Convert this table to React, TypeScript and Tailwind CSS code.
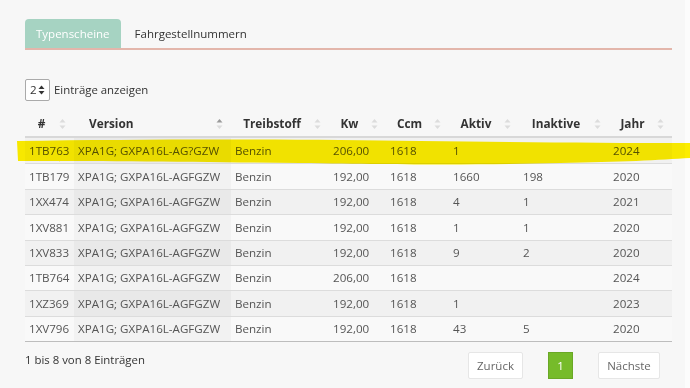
import React from 'react';

interface Row {
  nr: string;
  version: string;
  fuel: string;
  kw: string;
  ccm: string;
  active: string;
  inactive: string;
  year: string;
}

const rows: Row[] = [
  { nr: '1TB763', version: 'XPA1G; GXPA16L-AG?GZW', fuel: 'Benzin', kw: '206,00', ccm: '1618', active: '1', inactive: '', year: '2024' },
  { nr: '1TB179', version: 'XPA1G; GXPA16L-AGFGZW', fuel: 'Benzin', kw: '192,00', ccm: '1618', active: '1660', inactive: '198', year: '2020' },
  { nr: '1XX474', version: 'XPA1G; GXPA16L-AGFGZW', fuel: 'Benzin', kw: '192,00', ccm: '1618', active: '4', inactive: '1', year: '2021' },
  { nr: '1XV881', version: 'XPA1G; GXPA16L-AGFGZW', fuel: 'Benzin', kw: '192,00', ccm: '1618', active: '1', inactive: '1', year: '2020' },
  { nr: '1XV833', version: 'XPA1G; GXPA16L-AGFGZW', fuel: 'Benzin', kw: '192,00', ccm: '1618', active: '9', inactive: '2', year: '2020' },
  { nr: '1TB764', version: 'XPA1G; GXPA16L-AGFGZW', fuel: 'Benzin', kw: '206,00', ccm: '1618', active: '', inactive: '', year: '2024' },
  { nr: '1XZ369', version: 'XPA1G; GXPA16L-AGFGZW', fuel: 'Benzin', kw: '192,00', ccm: '1618', active: '1', inactive: '', year: '2023' },
  { nr: '1XV796', version: 'XPA1G; GXPA16L-AGFGZW', fuel: 'Benzin', kw: '192,00', ccm: '1618', active: '43', inactive: '5', year: '2020' },
];

// column widths in px, in table order
const cols = 'grid grid-cols-[49px_157px_98px_57px_63px_70px_90px_63px]';

// little DataTables style up/down arrows
const SortIcon: React.FC<{ asc?: boolean }> = ({ asc }) => (
  <svg width="7" height="12" viewBox="0 0 7 12" className="absolute right-[8px] top-1/2 -translate-y-1/2">
    <path d="M3.5 1 L6.5 4.5 L0.5 4.5 Z" fill={asc ? '#9a9a9a' : '#dcdcdc'} />
    <path d="M3.5 11 L6.5 7.5 L0.5 7.5 Z" fill="#dcdcdc" />
  </svg>
);

const Th: React.FC<{ label: string; left?: boolean; asc?: boolean }> = ({ label, left, asc }) => (
  <div className={`relative flex items-center h-full font-bold text-[#333] ${left ? 'pl-[15px]' : 'justify-center pr-[16px]'}`}>
    {label}
    <SortIcon asc={asc} />
  </div>
);

const App: React.FC = () => {
  return (
    <div className="relative flex w-[690px] h-[388px] overflow-hidden bg-[#f7f7f7] text-[11.6px] text-[#555] font-['Open_Sans',sans-serif]">
      <div className="w-[685px] px-[25px] pt-[19px]">
        {/* tabs */}
        <div className="flex items-end border-b-2 border-[#e3b6ab] w-[647px]">
          <div className="h-[29px] px-[11px] flex items-center rounded-t-[4px] bg-[#a6d3c2] text-white text-[11.5px]">
            Typenscheine
          </div>
          <div className="h-[29px] px-[14px] flex items-center text-[#333] text-[11.5px]">Fahrgestellnummern</div>
        </div>

        {/* length select */}
        <div className="flex items-center mt-[29px] h-[22px]">
          <div className="w-[25px] h-[22px] flex items-center pl-[4px] bg-white border border-[#aaa] rounded-[2px] text-[#333]">
            2
            <svg width="7" height="10" viewBox="0 0 7 10" className="ml-[1px]">
              <path d="M3.5 0.5 L6.5 4 L0.5 4 Z" fill="#333" />
              <path d="M3.5 9.5 L6.5 6 L0.5 6 Z" fill="#333" />
            </svg>
          </div>
          <span className="ml-[4px] text-[#333] text-[11.4px]">Einträge anzeigen</span>
        </div>

        {/* table */}
        <div className="mt-[10px] w-[647px]">
          <div className={`${cols} h-[27px] border-b-2 border-[#d8d8d8] text-[11.8px]`}>
            <Th label="#" />
            <Th label="Version" left asc />
            <Th label="Treibstoff" />
            <Th label="Kw" />
            <Th label="Ccm" />
            <Th label="Aktiv" />
            <Th label="Inaktive" />
            <Th label="Jahr" />
          </div>
          {rows.map((r, i) => {
            const odd = i % 2 === 0;
            return (
              <div
                key={r.nr}
                className={`${cols} h-[25.4px] items-stretch ${i > 0 ? 'border-t border-[#dcdcdc]' : ''} ${odd ? 'bg-[#f1f1f1]' : 'bg-[#f9f9f9]'}`}
              >
                <div className="pl-[4px] flex items-center">{r.nr}</div>
                <div className={`pl-[4px] flex items-center ${odd ? 'bg-[#e9e9e9]' : 'bg-[#f2f2f2]'}`}>{r.version}</div>
                <div className="pl-[4px] flex items-center">{r.fuel}</div>
                <div className="pl-[4px] flex items-center">{r.kw}</div>
                <div className="pl-[4px] flex items-center">{r.ccm}</div>
                <div className="pl-[4px] flex items-center">{r.active}</div>
                <div className="pl-[4px] flex items-center">{r.inactive}</div>
                <div className="pl-[4px] flex items-center">{r.year}</div>
              </div>
            );
          })}
          <div className="border-t border-[#bdbdbd]" />

          {/* footer */}
          <div className="flex items-start justify-between mt-[10px]">
            <div className="text-[#333] text-[11.4px] mt-[-1px]">1 bis 8 von 8 Einträgen</div>
            <div className="flex items-center mr-[12px] text-[11.5px]">
              <button className="h-[27px] w-[55px] bg-white border border-[#e6e6e6] rounded-[2px] text-[#666]">Zurück</button>
              <button className="h-[27px] w-[25px] ml-[25px] bg-[#76bb2a] border border-[#6aa826] text-white">1</button>
              <button className="h-[27px] w-[62px] ml-[25px] bg-white border border-[#e6e6e6] rounded-[2px] text-[#666]">Nächste</button>
            </div>
          </div>
        </div>
      </div>
      <div className="w-[5px] bg-[#fcfcfc]" />

      {/* yellow marker stroke over the first row */}
      <svg width="690" height="388" viewBox="0 0 690 388" className="absolute left-0 top-0 pointer-events-none mix-blend-multiply">
        <path
          d="M17 141 C150 139 300 139 420 141 C520 142 600 143 690 143 L690 158 C660 160 620 162 560 163 C480 165 420 165 300 163 C200 162 100 161 18 161 Z"
          fill="#fff000"
        />
      </svg>
    </div>
  );
};

export default App;
